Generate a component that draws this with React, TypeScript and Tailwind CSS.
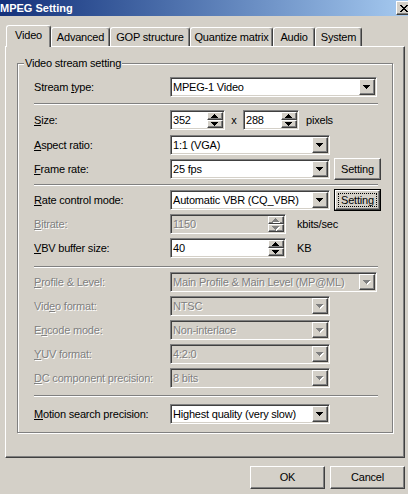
import React from "react";

const raised =
  "border border-t-white border-l-white border-r-[#404040] border-b-[#404040] shadow-[inset_-1px_-1px_0_#808080]";
const sunken =
  "border border-t-[#808080] border-l-[#808080] border-r-white border-b-white shadow-[inset_1px_1px_0_#404040,inset_-1px_-1px_0_#d4d0c8]";
const grayText = "text-[#808080] [text-shadow:1px_1px_0_#fff]";

function Arrow({ up, disabled }: { up?: boolean; disabled?: boolean }) {
  const d = up
    ? "M3 0h1v1H3z M2 1h3v1H2z M1 2h5v1H1z M0 3h7v1H0z"
    : "M0 0h7v1H0z M1 1h5v1H1z M2 2h3v1H2z M3 3h1v1H3z";
  return (
    <svg width="8" height="5" viewBox="0 0 8 5" shapeRendering="crispEdges">
      {disabled && <path d={d} fill="#fff" transform="translate(1 1)" />}
      <path d={d} fill={disabled ? "#808080" : "#000"} />
    </svg>
  );
}

function Combo({ value, className, disabled }: { value: string; className: string; disabled?: boolean }) {
  return (
    <div className={`${className} flex h-[20px] ${sunken} ${disabled ? "bg-[#d4d0c8]" : "bg-white"}`}>
      <div className={`flex flex-1 items-center overflow-hidden whitespace-nowrap pl-[2px] ${disabled ? grayText : ""}`}>
        {value}
      </div>
      <div className={`m-[1px] flex h-[16px] w-[16px] items-center justify-center bg-[#d4d0c8] ${raised}`}>
        <Arrow disabled={disabled} />
      </div>
    </div>
  );
}

function Spin({ value, className, disabled }: { value: string; className: string; disabled?: boolean }) {
  return (
    <div className={`${className} flex h-[20px] ${sunken} ${disabled ? "bg-[#d4d0c8]" : "bg-white"}`}>
      <div className={`flex flex-1 items-center pl-[2px] ${disabled ? grayText : ""}`}>{value}</div>
      <div className="my-[1px] mr-[1px] flex w-[16px] flex-col">
        <div className={`flex h-[8px] items-center justify-center bg-[#d4d0c8] ${raised}`}>
          <Arrow up disabled={disabled} />
        </div>
        <div className={`flex h-[8px] items-center justify-center bg-[#d4d0c8] ${raised}`}>
          <Arrow disabled={disabled} />
        </div>
      </div>
    </div>
  );
}

function SettingButton({ focused }: { focused?: boolean }) {
  if (focused) {
    return (
      <div className="ml-[4px] flex h-[22px] w-[47px] border border-black">
        <div className={`flex flex-1 bg-[#d4d0c8] ${raised}`}>
          <div className="m-[2px] flex flex-1 items-center justify-center border border-dotted border-black">
            Setting
          </div>
        </div>
      </div>
    );
  }
  return (
    <div className={`ml-[4px] flex h-[22px] w-[47px] items-center justify-center bg-[#d4d0c8] ${raised}`}>
      Setting
    </div>
  );
}

function Row({ label, disabled, className, children }: { label: React.ReactNode; disabled?: boolean; className: string; children: React.ReactNode }) {
  return (
    <div className={`flex h-[20px] items-center ${className}`}>
      <div className={`w-[136px] whitespace-nowrap ${disabled ? grayText : ""}`}>{label}</div>
      {children}
    </div>
  );
}

function Separator({ className }: { className: string }) {
  return <div className={`h-[2px] w-[344px] border-t border-b border-t-[#808080] border-b-white ${className}`} />;
}

function Tab({ label, width, selected }: { label: string; width: string; selected?: boolean }) {
  return (
    <div
      className={`${width} flex items-center justify-center rounded-t-[3px] border-t border-l border-r border-t-white border-l-white border-r-[#404040] bg-[#d4d0c8] shadow-[inset_-1px_0_0_#808080] ${
        selected ? "relative z-10 mb-[-1px] h-[22px] pb-[2px]" : "h-[19px]"
      }`}
    >
      {label}
    </div>
  );
}

export default function App() {
  return (
    <div className="relative h-[494px] w-[408px] overflow-hidden bg-[#d4d0c8] font-['Liberation_Sans',Arial,sans-serif] text-[11px] leading-none tracking-[-0.2px] text-black">
      <div className="flex h-[16px] items-center bg-linear-to-r from-[#14307a] to-[#a6caf0]">
        <span className="text-[11px] font-bold tracking-normal text-white">MPEG Setting</span>
        <div className={`ml-auto mr-[-4px] flex h-[14px] w-[16px] items-center justify-center bg-[#d4d0c8] ${raised}`}>
          <svg width="8" height="7" viewBox="0 0 8 7" shapeRendering="crispEdges">
            <path
              d="M0 0h2v1H0z M6 0h2v1H6z M1 1h2v1H1z M5 1h2v1H5z M2 2h4v1H2z M3 3h2v1H3z M2 4h4v1H2z M1 5h2v1H1z M5 5h2v1H5z M0 6h2v1H0z M6 6h2v1H6z"
              fill="#000"
            />
          </svg>
        </div>
      </div>

      <div className="flex h-[30px] items-end pl-[6px]">
        <Tab label="Video" width="w-[45px]" selected />
        <Tab label="Advanced" width="w-[59px]" />
        <Tab label="GOP structure" width="w-[80px]" />
        <Tab label="Quantize matrix" width="w-[83px]" />
        <Tab label="Audio" width="w-[42px]" />
        <Tab label="System" width="w-[47px]" />
      </div>

      <div className={`ml-[5px] h-[412px] w-[400px] pl-[11px] pt-[16px] ${raised}`}>
        <div className="relative h-[370px] w-[376px] border border-[#808080] pl-[16px] pt-[13px] shadow-[1px_1px_0_#fff,inset_1px_1px_0_#fff]">
          <span className="absolute left-[6px] top-[-7px] bg-[#d4d0c8] px-[1px] leading-[13px]">Video stream setting</span>

          <Row label={<>Stream <u>t</u>ype:</>} className="">
            <Combo value="MPEG-1 Video" className="w-[207px]" />
          </Row>
          <Separator className="mt-[6px]" />

          <Row label={<><u>S</u>ize:</>} className="mt-[5px]">
            <Spin value="352" className="w-[55px]" />
            <span className="w-[18px] text-center">x</span>
            <Spin value="288" className="w-[56px]" />
            <span className="ml-[7px]">pixels</span>
          </Row>
          <Row label={<><u>A</u>spect ratio:</>} className="mt-[5px]">
            <Combo value="1:1 (VGA)" className="w-[160px]" />
          </Row>
          <Row label={<><u>F</u>rame rate:</>} className="mt-[4px]">
            <Combo value="25 fps" className="w-[160px]" />
            <SettingButton />
          </Row>
          <Separator className="mt-[5px]" />

          <Row label={<><u>R</u>ate control mode:</>} className="mt-[4px]">
            <Combo value="Automatic VBR (CQ_VBR)" className="w-[160px]" />
            <SettingButton focused />
          </Row>
          <Row label={<><u>B</u>itrate:</>} disabled className="mt-[4px]">
            <Spin value="1150" className="w-[116px]" disabled />
            <span className="ml-[11px]">kbits/sec</span>
          </Row>
          <Row label={<><u>V</u>BV buffer size:</>} className="mt-[4px]">
            <Spin value="40" className="w-[116px]" />
            <span className="ml-[11px]">KB</span>
          </Row>
          <Separator className="mt-[8px]" />

          <Row label={<><u>P</u>rofile &amp; Level:</>} disabled className="mt-[4px]">
            <Combo value="Main Profile & Main Level (MP@ML)" className="w-[207px]" disabled />
          </Row>
          <Row label={<>Vid<u>e</u>o format:</>} disabled className="mt-[4px]">
            <Combo value="NTSC" className="w-[160px]" disabled />
          </Row>
          <Row label={<>E<u>n</u>code mode:</>} disabled className="mt-[4px]">
            <Combo value="Non-interlace" className="w-[160px]" disabled />
          </Row>
          <Row label={<><u>Y</u>UV format:</>} disabled className="mt-[4px]">
            <Combo value="4:2:0" className="w-[160px]" disabled />
          </Row>
          <Row label={<><u>D</u>C component precision:</>} disabled className="mt-[4px]">
            <Combo value="8 bits" className="w-[160px]" disabled />
          </Row>
          <Separator className="mt-[7px]" />

          <Row label={<><u>M</u>otion search precision:</>} className="mt-[7px]">
            <Combo value="Highest quality (very slow)" className="w-[160px]" />
          </Row>
        </div>
      </div>

      <div className="mt-[8px] flex justify-end gap-[5px] pr-[3px]">
        <div className={`flex h-[23px] w-[75px] items-center justify-center bg-[#d4d0c8] ${raised}`}>OK</div>
        <div className={`flex h-[23px] w-[75px] items-center justify-center bg-[#d4d0c8] ${raised}`}>Cancel</div>
      </div>
    </div>
  );
}
